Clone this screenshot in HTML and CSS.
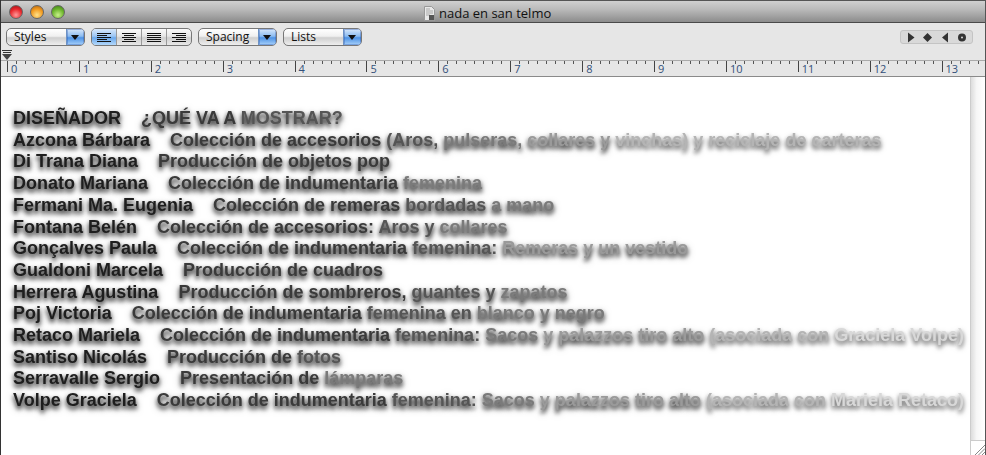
FILE: index.html
```html
<!DOCTYPE html>
<html lang="es">
<head>
<meta charset="utf-8">
<title>nada en san telmo</title>
<link rel="stylesheet" href="styles.css">
</head>
<body>
<div class="window">
  <header class="titlebar">
    <div class="lights">
      <span class="light red"></span>
      <span class="light amber"></span>
      <span class="light green"></span>
    </div>
    <div class="title">
      <svg class="docicon" width="11" height="15" viewBox="0 0 11 15"><path d="M.5.5h7l3 3v11H.5z" fill="#e8e8e8" stroke="#999"/><path d="M2 3h4M2 5h7M2 7h7M2 9h4" stroke="#aaa"/><rect x="5" y="9" width="5" height="5" fill="#555"/></svg>
      <span>nada en san telmo</span>
    </div>
  </header>
  <div class="toolbar">
    <div class="controls">
      <div class="select"><span class="label">Styles</span><span class="arrow"></span></div>
      <div class="aligns">
        <span class="align on"><svg width="14" height="9" viewBox="0 0 14 9"><path d="M0 .5h14M0 2.500h10M0 4.500h14M0 6.500h10M0 8.500h14" stroke="#111"/></svg></span>
        <span class="align"><svg width="14" height="9" viewBox="0 0 14 9"><path d="M0 .5h14M2 2.500h10M0 4.500h14M2 6.500h10M0 8.500h14" stroke="#111"/></svg></span>
        <span class="align"><svg width="14" height="9" viewBox="0 0 14 9"><path d="M0 .5h14M0 2.500h14M0 4.500h14M0 6.500h14M0 8.500h14" stroke="#111"/></svg></span>
        <span class="align"><svg width="14" height="9" viewBox="0 0 14 9"><path d="M0 .5h14M4 2.500h10M0 4.500h14M4 6.500h10M0 8.500h14" stroke="#111"/></svg></span>
      </div>
      <div class="select"><span class="label">Spacing</span><span class="arrow"></span></div>
      <div class="select"><span class="label">Lists</span><span class="arrow"></span></div>
      <div class="player">
        <svg width="58" height="11" viewBox="0 0 58 11" fill="#333"><path d="M0 .5l6.500 5-6.500 5z"/><path d="M15 5.500l4.500-4.500 4.500 4.500-4.500 4.500z"/><path d="M34 5.500l6-5v10z"/><path fill-rule="evenodd" d="M58 5.500a4 4 0 1 1-8 0 4 4 0 1 1 8 0zM55 5.500a1 1 0 1 0-2 0 1 1 0 1 0 2 0z"/></svg>
      </div>
    </div>
    <div class="tabmark"><svg width="10" height="10" viewBox="0 0 10 10"><path d="M0 .5h10M1 2.500h8" stroke="#333" fill="none"/><path d="M0 4h10L5 10z" fill="#444"/></svg></div>
    <div class="ruler">
      <span class="inch">0</span><span class="inch">1</span><span class="inch">2</span><span class="inch">3</span><span class="inch">4</span><span class="inch">5</span><span class="inch">6</span><span class="inch">7</span><span class="inch">8</span><span class="inch">9</span><span class="inch">10</span><span class="inch">11</span><span class="inch">12</span><span class="inch">13</span>
    </div>
  </div>
  <div class="page">
    <main class="doc">
      <p><span class="c1">DISEÑADOR    </span><span class="c2">¿QUÉ VA A </span><span class="c3">MOSTRAR?</span></p>
      <p><span class="c1">Azcona Bárbara    </span><span class="c2">Colección de accesorios </span><span class="c3">(Aros, </span><span class="c4">pulseras, </span><span class="c5">collares y </span><span class="c6">vinchas) y reciclaje de carteras</span></p>
      <p><span class="c1">Di Trana Diana    </span><span class="c2">Producción de objetos pop</span></p>
      <p><span class="c1">Donato Mariana    </span><span class="c2">Colección de indumentaria </span><span class="c4">femenina</span></p>
      <p><span class="c1">Fermani Ma. Eugenia    </span><span class="c2">Colección de remeras </span><span class="c3">bordadas </span><span class="c4">a mano</span></p>
      <p><span class="c1">Fontana Belén    </span><span class="c2">Colección de accesorios: </span><span class="c3">Aros y </span><span class="c4">collares</span></p>
      <p><span class="c1">Gonçalves Paula    </span><span class="c2">Colección de indumentaria </span><span class="c3">femenina: </span><span class="c5">Remeras y un vestido</span></p>
      <p><span class="c1">Gualdoni Marcela    </span><span class="c2">Producción de cuadros</span></p>
      <p><span class="c1">Herrera Agustina    </span><span class="c2">Producción de sombreros, </span><span class="c3">guantes y </span><span class="c4">zapatos</span></p>
      <p><span class="c1">Poj Victoria    </span><span class="c2">Colección de indumentaria </span><span class="c3">femenina en </span><span class="c4">blanco y negro</span></p>
      <p><span class="c1">Retaco Mariela    </span><span class="c2">Colección de indumentaria </span><span class="c3">femenina: </span><span class="c4">Sacos </span><span class="c5">y palazzos tiro alto </span><span class="c6">(asociada con </span><span class="c7">Graciela Volpe)</span></p>
      <p><span class="c1">Santiso Nicolás    </span><span class="c2">Producción de </span><span class="c3">fotos</span></p>
      <p><span class="c1">Serravalle Sergio    </span><span class="c2">Presentación de </span><span class="c4">lámparas</span></p>
      <p><span class="c1">Volpe Graciela    </span><span class="c2">Colección de indumentaria </span><span class="c3">femenina: </span><span class="c4">Sacos </span><span class="c5">y palazzos tiro alto </span><span class="c6">(asociada con </span><span class="c7">Mariela Retaco)</span></p>
    </main>
    <aside class="scrollbar">
      <div class="track"></div>
      <div class="grip"><svg width="15" height="15" viewBox="0 0 15 15"><path d="M14 4L4 14M14 7.500L7.500 14M14 11L11 14" stroke="#888" fill="none"/></svg></div>
    </aside>
  </div>
</div>
</body>
</html>
```

FILE: styles.css
```css
* { box-sizing: border-box; }
html, body { margin: 0; height: 100%; overflow: hidden; background: #fff; }
.window { width: 986px; height: 455px; display: flex; flex-direction: column; border-left: 1px solid #333; border-right: 1px solid #555; }
.titlebar {
  height: 23px; flex: none; display: flex; align-items: center; position: relative;
  background: linear-gradient(#d0d0d0 0, #bababa 40%, #8c8c8c 100%);
  border-top: 1px solid #555; border-bottom: 1px solid #4a4a4a;
}
.lights { display: flex; gap: 7px; padding-left: 8px; }
.light { width: 14px; height: 14px; border-radius: 50%; border: 1px solid #666; }
.red { background: radial-gradient(circle at 50% 75%, #ff9a9a 0, #e8272c 55%, #9a1015 100%); }
.amber { background: radial-gradient(circle at 50% 75%, #ffe28a 0, #f29a1f 55%, #a85f10 100%); }
.green { background: radial-gradient(circle at 50% 75%, #c8f08a 0, #6cb52c 55%, #3a7a14 100%); }
.title {
  position: absolute; left: 423px; top: 3px; display: flex; align-items: center; gap: 4px;
  font: 13px "Open Sans", sans-serif; color: #111;
}
.docicon { flex: none; }
.toolbar { height: 54px; flex: none; background: #e6e6e6; border-bottom: 1px solid #8a8a8a; display: flex; flex-direction: column; }
.controls { display: flex; gap: 6px; padding: 5px 0 0 5px; height: 29px; flex: none; }
.select {
  width: 79px; height: 18px; display: flex; justify-content: space-between; overflow: hidden;
  border: 1px solid #777; border-radius: 5px;
  background: linear-gradient(#fff, #f0f0f0 45%, #cfcfcf 55%, #eee);
}
.label { font: 12px/16px "Open Sans", sans-serif; color: #111; padding-left: 7px; }
.arrow {
  width: 18px; position: relative; border-left: 1px solid #6d92c4;
  background: linear-gradient(#d8e8fb, #8dbcf0 45%, #4d92e4 55%, #a9d2fb);
  box-shadow: inset 0 0 0 1px rgba(40,80,170,.35);
}
.arrow::after {
  content: ""; position: absolute; left: 4px; top: 6px;
  border: 4px solid transparent; border-top: 5px solid #111; border-bottom: 0;
}
.aligns {
  width: 101px; height: 18px; display: flex; overflow: hidden; border: 1px solid #777; border-radius: 5px;
  background: linear-gradient(#fafafa, #e6e6e6 45%, #cfcfcf 55%, #e8e8e8);
}
.align { flex: 1; display: flex; align-items: center; justify-content: center; border-left: 1px solid #999; }
.align:first-child { border-left: 0; }
.align.on { background: linear-gradient(#d8e8fb, #9cc6f4 45%, #6aa8ec 55%, #b3d8fb); }
.player {
  margin: 2px 12px 0 auto; width: 73px; height: 14px; display: flex; align-items: center; justify-content: center;
  background: #d9d9d9; border: 1px solid #c4c4c4; border-radius: 3px;
}
.tabmark { height: 10px; margin: -2px 0 0 1px; flex: none; line-height: 0; }
.ruler { display: flex; height: 14px; flex: none; padding-left: 6px; border-top: 1px solid #aaa; }
.inch {
  width: 71.900px; flex: none; height: 11px; padding: 2px 0 0 3px; border-left: 1px solid #444;
  font: 11px/11px "Open Sans", sans-serif; color: #33507a;
  background: repeating-linear-gradient(90deg, transparent 0 8px, #555 8px 9px) left top / 100% 3px no-repeat;
}
.page { flex: 1; min-height: 0; display: flex; background: #fff; }
.doc { flex: 1; padding: 31px 0 0 12px; font: bold 18px/21.700px "Liberation Sans", sans-serif; overflow: hidden; filter: blur(.35px); }
.doc p { margin: 0; white-space: pre; }
.doc span { text-shadow: 0 3px 4px rgba(0,0,0,.75), 0 3px 7px rgba(0,0,0,.55); }
.c1 { color: #1e1e1e; }
.c2 { color: #3a3a3a; }
.c3 { color: #555; }
.c4 { color: #7a7a7a; }
.c5 { color: #9a9a9a; }
.doc .c6 { color: #b4b4b4; text-shadow: 0 3px 4px rgba(0,0,0,.55), 0 3px 6px rgba(0,0,0,.4); }
.doc .c7 { color: #d8d8d8; text-shadow: 0 3px 4px rgba(0,0,0,.5), 0 3px 6px rgba(0,0,0,.35); }
.scrollbar { width: 15px; flex: none; display: flex; flex-direction: column; }
.track { flex: 1; background: linear-gradient(90deg, #dcdcdc, #f6f6f6 40%, #fff); border-left: 1px solid #ccc; }
.grip { height: 15px; flex: none; line-height: 0; background: #fff; border-left: 1px solid #ccc; border-top: 1px solid #ccc; }
```
